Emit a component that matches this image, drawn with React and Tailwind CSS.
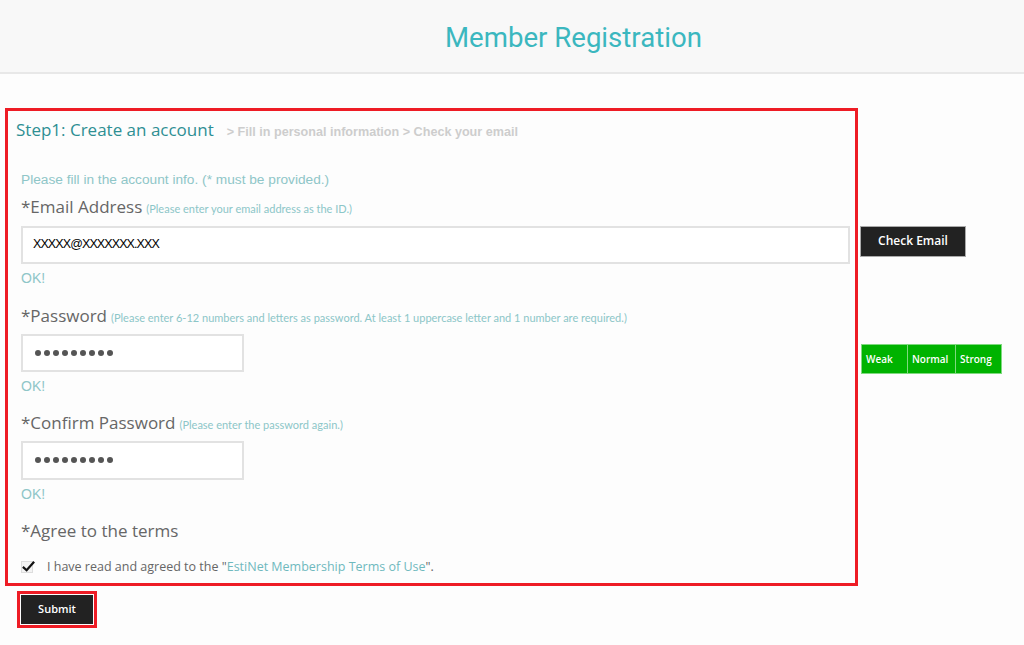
import React, { useState } from 'react';

const label = "font-['Open_Sans',sans-serif] text-[17px] text-[#666]";
const hint = "font-['Lato',sans-serif] text-[11px] text-[#8cc6c8] ml-1";
const ok = "font-['Liberation_Sans',Arial,sans-serif] text-[14px] text-[#8fc6c8] leading-none";
const inputBox = "h-[38px] border-2 border-[#e2e2e2] bg-white flex items-center px-[10px]";

const Dots = () => (
    <div className="flex gap-[3px] pl-[2px]">
        {Array.from({ length: 9 }).map((_, i) => (
            <span key={i} className="block w-[6px] h-[6px] rounded-full bg-[#555]" />
        ))}
    </div>
);

const App = () => {
    const [agreed, setAgreed] = useState(true);

    return (
        <div className="w-[1024px] h-[645px] bg-[#fdfdfd] overflow-hidden font-['Liberation_Sans',Arial,sans-serif]">
            <div className="h-[74px] bg-[#f8f8f8] border-b-2 border-[#e8e8e8] flex items-center pl-[445px] pt-[3px]">
                <h1 className="font-['Roboto',sans-serif] text-[27.6px] text-[#3bb7bf]">Member Registration</h1>
            </div>

            <div className="mt-[34px] ml-[5px] w-[853px] h-[478px] border-[3px] border-[#ee1c25] pl-[13px]">
                <div className="flex items-baseline pt-[6px] -ml-[5px]">
                    <span className="font-['Open_Sans',sans-serif] text-[17px] text-[#2e8f93]">Step1: Create an account</span>
                    <span className="ml-[13px] font-bold text-[12.6px] text-[#cdcdcd]">&gt; Fill in personal information &gt; Check your email</span>
                </div>

                <p className="mt-[30px] text-[13.7px] text-[#8fc6c8] leading-none">Please fill in the account info. (* must be provided.)</p>

                <div className="mt-[8px] flex items-baseline">
                    <span className={label}>*Email Address</span>
                    <span className={hint}>(Please enter your email address as the ID.)</span>
                </div>
                <div className="mt-[6px] flex items-start gap-[10px] w-[945px]">
                    <div className={`${inputBox} w-[829px]`}>
                        <span className="text-[12.5px] text-black tracking-[-0.9px]">XXXXX@XXXXXXX.XXX</span>
                    </div>
                    <button className="h-[31px] w-[106px] bg-[#222] text-white font-['Open_Sans',sans-serif] font-semibold text-[12px] border border-[#aaa]">
                        Check Email
                    </button>
                </div>
                <p className={`${ok} mt-[7px]`}>OK!</p>

                <div className="mt-[18px] flex items-baseline">
                    <span className={label}>*Password</span>
                    <span className={hint}>(Please enter 6-12 numbers and letters as password. At least 1 uppercase letter and 1 number are required.)</span>
                </div>
                <div className="mt-[6px] h-[38px] flex items-start justify-between w-[981px]">
                    <div className={`${inputBox} w-[223px]`}>
                        <Dots />
                    </div>
                    <div className="mt-[10px] flex h-[30px] font-['Open_Sans',sans-serif] font-semibold text-[10px] text-white">
                        <span className="w-[47px] bg-[#00b300] border border-[#7fd97f] flex items-center pl-[4px]">Weak</span>
                        <span className="w-[48px] bg-[#00b300] border border-l-0 border-[#7fd97f] flex items-center pl-[4px]">Normal</span>
                        <span className="w-[46px] bg-[#00b300] border border-l-0 border-[#7fd97f] flex items-center pl-[4px]">Strong</span>
                    </div>
                </div>
                <p className={`${ok} mt-[7px]`}>OK!</p>

                <div className="mt-[17px] flex items-baseline">
                    <span className={label}>*Confirm Password</span>
                    <span className={hint}>(Please enter the password again.)</span>
                </div>
                <div className="mt-[5px]">
                    <div className={`${inputBox} w-[223px] h-[39px]`}>
                        <Dots />
                    </div>
                </div>
                <p className={`${ok} mt-[7px]`}>OK!</p>

                <div className="mt-[17px]">
                    <span className={label}>*Agree to the terms</span>
                </div>
                <label className="mt-[14px] flex items-center gap-[14px] cursor-pointer">
                    <span
                        onClick={() => setAgreed(!agreed)}
                        className="relative w-[12px] h-[12px] border border-[#ddd] bg-[#f3f3f3]"
                    >
                        {agreed && (
                            <svg viewBox="0 0 16 16" className="absolute -left-[1px] -top-[3px] w-[15px] h-[15px]">
                                <path d="M2 8.5 L6 12 L14 3" fill="none" stroke="#111" strokeWidth="2.4" />
                            </svg>
                        )}
                    </span>
                    <span className="font-['Open_Sans',sans-serif] text-[12.5px] text-[#666]">
                        I have read and agreed to the "<span className="text-[#6fb9bd]">EstiNet Membership Terms of Use</span>".
                    </span>
                </label>
            </div>

            <div className="mt-[5px] ml-[17px] w-[80px] h-[37px] border-[3px] border-[#ee1c25] p-[1px]">
                <button className="w-full h-full bg-[#222] text-white font-['Open_Sans',sans-serif] font-semibold text-[11px]">Submit</button>
            </div>
        </div>
    );
};

export default App;
